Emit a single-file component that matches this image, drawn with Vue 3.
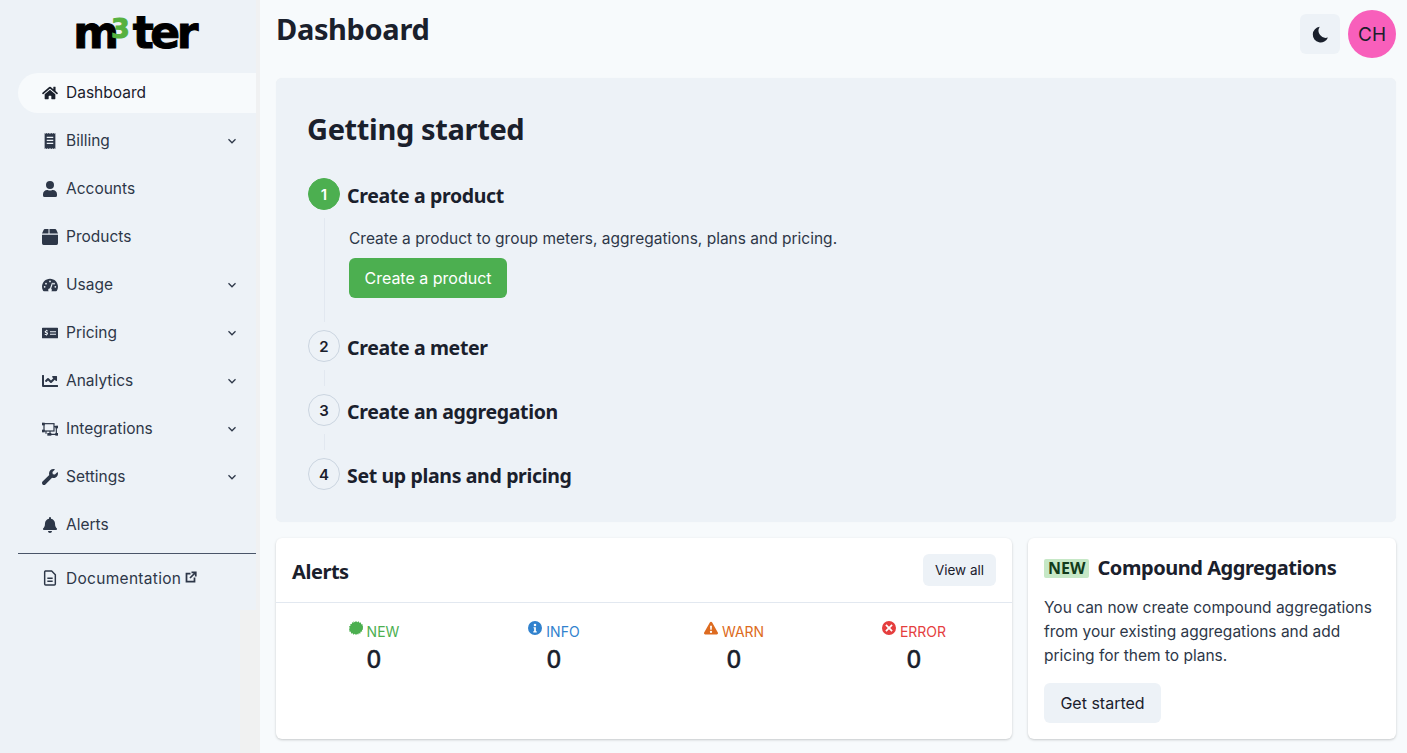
<script setup>
const nav = [
  { label: 'Billing', icon: 'billing', caret: true },
  { label: 'Accounts', icon: 'user' },
  { label: 'Products', icon: 'box' },
  { label: 'Usage', icon: 'gauge', caret: true },
  { label: 'Pricing', icon: 'money', caret: true },
  { label: 'Analytics', icon: 'chart', caret: true },
  { label: 'Integrations', icon: 'proj', caret: true },
  { label: 'Settings', icon: 'wrench', caret: true },
  { label: 'Alerts', icon: 'bell' }
]
const steps = ['Create a meter', 'Create an aggregation', 'Set up plans and pricing']
const alerts = [
  { label: 'NEW', cls: 'new', icon: 'burst' },
  { label: 'INFO', cls: 'info', icon: 'info' },
  { label: 'WARN', cls: 'warn', icon: 'warn' },
  { label: 'ERROR', cls: 'error', icon: 'err' }
]
</script>

<template>
  <div class="app">
    <aside class="side">
      <div class="logo"><span>m</span><span class="three">3</span><span class="ter">ter</span></div>
      <nav class="nav">
        <a class="item active">
          <svg class="ic" viewBox="0 0 576 512"><path fill="currentColor" d="M280.4 148.3 96 300.1V464a16 16 0 0 0 16 16l112-.3a16 16 0 0 0 16-16V368a16 16 0 0 1 16-16h64a16 16 0 0 1 16 16v95.6a16 16 0 0 0 16 16l112 .4a16 16 0 0 0 16-16V300L295.7 148.3a12.2 12.2 0 0 0-15.3 0zM571.6 251.5 488 182.6V44a12 12 0 0 0-12-12h-56a12 12 0 0 0-12 12v72.6L318.5 43a48 48 0 0 0-61 0L4.3 251.5a12 12 0 0 0-1.6 16.9l25.5 31A12 12 0 0 0 45.2 301l235.2-193.7a12.2 12.2 0 0 1 15.3 0L530.9 301a12 12 0 0 0 16.9-1.6l25.5-31a12 12 0 0 0-1.7-16.9z"/></svg>
          <span class="lbl">Dashboard</span>
        </a>
        <a v-for="n in nav" :key="n.label" class="item">
          <svg v-if="n.icon === 'billing'" class="ic" viewBox="0 0 384 512"><path fill="currentColor" d="M20 0 48 24 80 0l32 24 32-24 48 24 48-24 32 24 32-24 32 24 28-24v512l-28-24-32 24-32-24-32 24-48-24-48 24-32-24-32 24-32-24-28 24V0zM88 120v40h208v-40H88zm0 96v40h208v-40H88zm0 96v40h208v-40H88z"/></svg>
          <svg v-else-if="n.icon === 'user'" class="ic" viewBox="0 0 448 512"><path fill="currentColor" d="M224 256a128 128 0 1 0 0-256 128 128 0 0 0 0 256zm89.6 32h-16.7a174 174 0 0 1-145.8 0h-16.7A134.4 134.4 0 0 0 0 422.4V464a48 48 0 0 0 48 48h352a48 48 0 0 0 48-48v-41.6A134.4 134.4 0 0 0 313.6 288z"/></svg>
          <svg v-else-if="n.icon === 'box'" class="ic" viewBox="0 32 512 448" preserveAspectRatio="none"><path fill="currentColor" d="M50.7 58.5 0 160h208V32H93.7a48 48 0 0 0-43 26.5zM240 160h272L461.3 58.5a48 48 0 0 0-43-26.5H240v128zm272 32H0v240a48 48 0 0 0 48 48h416a48 48 0 0 0 48-48V192z"/></svg>
          <svg v-else-if="n.icon === 'gauge'" class="ic" viewBox="0 0 576 512"><path fill="currentColor" fill-rule="evenodd" d="M288 32C129 32 0 161 0 320c0 53 14 102 39 145 6 10 17 15 28 15h442c11 0 22-5 28-15 25-43 39-92 39-145C576 161 447 32 288 32zM288 96a32 32 0 1 1 0 64 32 32 0 0 1 0-64zM96 352a32 32 0 1 1 0-64 32 32 0 0 1 0 64zm48-112a32 32 0 1 1 0-64 32 32 0 0 1 0 64zm247-40-61 185c15 13 24 31 24 55 0 22-8 30-19 40H239c-11-10-15-18-15-40 0-34 29-63 64-64l62-186c4-12 16-18 28-14 12 4 17 12 13 24zm41 40a32 32 0 1 1 0-64 32 32 0 0 1 0 64zm48 112a32 32 0 1 1 0-64 32 32 0 0 1 0 64z"/></svg>
          <svg v-else-if="n.icon === 'money'" class="ic" viewBox="0 0 24 24"><path fill="currentColor" fill-rule="evenodd" d="M1 4h22a1 1 0 0 1 1 1v14a1 1 0 0 1-1 1H1a1 1 0 0 1-1-1V5a1 1 0 0 1 1-1zm5 3v1.200C4.800 8.400 4 9.200 4 10.200c0 2.300 3 1.600 3 2.800 0 .8-2 .8-3 .2v1.400c.6.200 1.300.3 2 .3V16h1v-1.200c1.200-.3 2-1.100 2-2.100 0-2.300-3-1.700-3-2.800 0-.7 1.600-.7 2.600-.2V8.300C8.100 8.100 7.600 8 7 8V7H6zm6 2.500V11h9V9.500h-9zm0 3.500v1.500h9V13h-9z"/></svg>
          <svg v-else-if="n.icon === 'chart'" class="ic" viewBox="0 0 512 512"><path fill="currentColor" d="M496 384H64V80a16 16 0 0 0-16-16H16A16 16 0 0 0 0 80v336a32 32 0 0 0 32 32h464a16 16 0 0 0 16-16v-32a16 16 0 0 0-16-16zM464 96H346a24 24 0 0 0-17 41l32 33-73 73-73-73a32 32 0 0 0-46 0l-69 69a16 16 0 0 0 0 23l23 23a16 16 0 0 0 23 0l46-46 73 73a32 32 0 0 0 46 0l96-96 33 32a24 24 0 0 0 41-17V112a16 16 0 0 0-16-16z"/></svg>
          <svg v-else-if="n.icon === 'proj'" class="ic" viewBox="0 0 24 24"><g fill="none" stroke="currentColor" stroke-width="1.800"><rect x="3" y="4" width="15" height="11"/><path d="M18 8.500H22M21.500 8.500v11M21.500 20H12M12 15v5M6 15v4"/></g><g fill="currentColor"><rect x="0" y="2.500" width="4" height="4"/><rect x="0" y="13" width="4" height="4"/><rect x="20" y="7" width="4" height="4"/><rect x="20" y="18" width="4" height="4"/><rect x="8" y="18" width="6" height="4"/></g></svg>
          <svg v-else-if="n.icon === 'wrench'" class="ic" viewBox="0 0 512 512"><path fill="currentColor" d="M507.700 109.100c-2.200-9-13.500-12.100-20.100-5.500l-74.400 74.400-67.900-11.300-11.300-67.900 74.400-74.400c6.600-6.600 3.400-17.900-5.700-20.200-47.400-11.700-99.600.9-136.600 37.900-39.600 39.600-50.600 97.100-34.100 147.200L18.700 402.800c-25 25-25 65.500 0 90.500 25 25 65.500 25 90.500 0l213.200-213.200c50.100 16.700 107.500 5.700 147.400-34.200 37.100-37.100 49.700-89.300 37.900-136.800z"/></svg>
          <svg v-else-if="n.icon === 'bell'" class="ic" viewBox="0 0 448 512"><path fill="currentColor" d="M224 512c35 0 64-29 64-64H160c0 35 29 64 64 64zm215-150c-19-21-55-52-55-154 0-78-54-140-128-155V32a32 32 0 0 0-64 0v21C118 68 64 130 64 208c0 102-36 133-55 154-6 6-9 14-9 22 0 16 13 32 32 32h384c19 0 32-16 32-32 0-8-3-16-9-22z"/></svg>
          <span class="lbl">{{ n.label }}</span>
          <svg v-if="n.caret" class="caret" viewBox="0 0 24 24"><path fill="none" stroke="currentColor" stroke-width="2.500" d="m5 8.500 7 7 7-7"/></svg>
        </a>
      </nav>
      <div class="rule"></div>
      <a class="item doc">
        <svg class="ic" viewBox="0 0 24 24"><path fill="none" stroke="currentColor" stroke-width="2.200" stroke-linejoin="round" d="M5 1.500h9.500L20 7v14a1.500 1.500 0 0 1-1.500 1.500h-13A1.500 1.500 0 0 1 4 21V3a1.500 1.500 0 0 1 1-1.500zM8 12.500h8M8 17h8"/></svg>
        <span class="doc-text">Documentation</span>
        <svg class="ext" viewBox="0 0 24 24"><path fill="none" stroke="currentColor" stroke-width="3.500" d="M19 13v8H3V5h8M10 14 21 3M13 2.500h8.500V11"/></svg>
      </a>
    </aside>

    <main class="main">
      <header class="top">
        <h1>Dashboard</h1>
        <div class="tools">
          <button class="moon">
            <svg viewBox="0 0 24 24"><path fill="currentColor" d="M21.400 15.700A9 9 0 0 1 11 2.300a9.900 9.900 0 1 0 10.400 13.400z"/></svg>
          </button>
          <div class="avatar">CH</div>
        </div>
      </header>

      <section class="start">
        <h2>Getting started</h2>
        <div class="step">
          <div class="num on">1</div>
          <h3>Create a product</h3>
        </div>
        <div class="body big">
          <p>Create a product to group meters, aggregations, plans and pricing.</p>
          <button class="green">Create a product</button>
        </div>
        <template v-for="(s, i) in steps" :key="s">
          <div class="step">
            <div class="num">{{ i + 2 }}</div>
            <h3>{{ s }}</h3>
          </div>
          <div v-if="i < 2" class="body small"></div>
        </template>
      </section>

      <div class="cards">
        <section class="card alerts">
          <div class="card-head">
            <h4>Alerts</h4>
            <button class="soft small-btn">View all</button>
          </div>
          <div class="stats">
            <div v-for="a in alerts" :key="a.label" class="stat">
              <div class="stat-label" :class="a.cls">
                <svg v-if="a.icon === 'burst'" viewBox="0 0 24 24"><path fill="currentColor" d="m12 0 2 2 2.500-1.500 1.200 2.700 2.800-.6.300 2.900 2.900.3-.6 2.800 2.700 1.200L23.300 12l1.500 2-2.700 1.400.6 2.800-2.900.3-.3 2.900-2.800-.6-1.200 2.700L14 22l-2 2-2-2-2.500 1.500-1.200-2.700-2.800.6-.3-2.900-2.900-.3.600-2.800L-.1 14l1.500-2-1.500-2.500 2.700-1.200-.6-2.800 2.900-.3.300-2.900 2.800.6L7.500.5 10 2z"/></svg>
                <svg v-else-if="a.icon === 'info'" viewBox="0 0 24 24"><path fill="currentColor" fill-rule="evenodd" d="M12 0a12 12 0 1 0 0 24 12 12 0 0 0 0-24zm0 4.500a2.200 2.200 0 1 1 0 4.400 2.200 2.200 0 0 1 0-4.400zM9.500 10.500h4v7h1.500v2.200H9v-2.200h1.500v-5h-1z"/></svg>
                <svg v-else-if="a.icon === 'warn'" viewBox="0 0 24 24"><path fill="currentColor" fill-rule="evenodd" d="M10 2.500a2.300 2.300 0 0 1 4 0l9.700 17a2.300 2.300 0 0 1-2 3.500H2.300a2.300 2.300 0 0 1-2-3.500zM10.400 8l.4 7h2.400l.4-7zM12 16.500a2 2 0 1 0 0 4 2 2 0 0 0 0-4z"/></svg>
                <svg v-else viewBox="0 0 24 24"><path fill="currentColor" fill-rule="evenodd" d="M12 0a12 12 0 1 0 0 24 12 12 0 0 0 0-24zM7.800 5.700 12 9.900l4.200-4.200 2.100 2.100-4.200 4.200 4.200 4.200-2.100 2.100-4.200-4.200-4.200 4.200-2.100-2.100 4.200-4.200-4.200-4.200z"/></svg>
                <span>{{ a.label }}</span>
              </div>
              <div class="stat-val">0</div>
            </div>
          </div>
        </section>

        <section class="card promo">
          <div class="promo-title"><span class="badge">NEW</span><h4>Compound Aggregations</h4></div>
          <p>You can now create compound aggregations from your existing aggregations and add pricing for them to plans.</p>
          <button class="soft">Get started</button>
        </section>
      </div>
    </main>
  </div>
</template>

<style>
html, body { margin: 0; padding: 0; }
</style>

<style scoped>
.app {
  display: flex;
  width: 100%;
  height: 753px;
  overflow: hidden;
  background: #f7fafc;
  color: #2d3748;
  font-family: "Inter", "Noto Sans", sans-serif;
  font-size: 15.5px;
}
.side {
  position: relative;
  width: 260px;
  flex: none;
  box-sizing: border-box;
  padding: 0 4px 0 18px;
  background: #edf2f7;
}
.side::before {
  content: "";
  position: absolute;
  left: 256px;
  top: 0;
  width: 4px;
  height: 610px;
  background: #f0f1f2;
}
.side::after {
  content: "";
  position: absolute;
  left: 240px;
  top: 610px;
  width: 20px;
  bottom: 0;
  background: #f0f1f1;
}
.logo {
  display: flex;
  justify-content: center;
  align-items: baseline;
  height: 73px;
  box-sizing: border-box;
  padding: 11px 6px 0 0;
  font: 700 44px/44px "DejaVu Sans", sans-serif;
  color: #000;
  -webkit-text-stroke: 1px #000;
}
.logo .three {
  position: relative;
  top: -10px;
  margin: 0 3px 0 -8px;
  font-size: 27px;
  color: #56b13f;
  -webkit-text-stroke: 1px #56b13f;
}
.logo .ter { letter-spacing: -3.5px; }
.nav { display: flex; flex-direction: column; gap: 8px; }
.item {
  display: flex;
  align-items: center;
  height: 40px;
  padding: 0 18px 0 24px;
  border-radius: 20px 0 0 20px;
}
.lbl { margin-top: -2px; }
.item.active { background: #f7fafc; color: #1a202c; }
.ic { width: 16px; height: 16px; flex: none; margin-right: 8px; }
.caret { width: 12px; height: 12px; margin-left: auto; }
.rule { height: 1px; background: #4a5568; margin-top: 8px; }
.doc { height: 48px; }
.doc-text { letter-spacing: .3px; }
.ext { width: 12px; height: 12px; margin-left: 4px; margin-top: -3px; }

.main {
  flex: 1;
  min-width: 0;
  padding: 0 11px 0 16px;
  box-sizing: border-box;
}
.top {
  display: flex;
  justify-content: space-between;
  height: 78px;
  box-sizing: border-box;
}
h1 {
  margin: 9px 0 0;
  font: 700 29px/40px "Noto Sans", sans-serif;
  letter-spacing: -.35px;
  color: #1a202c;
}
.tools { display: flex; gap: 8px; padding-top: 10px; align-items: flex-start; }
.moon {
  width: 40px;
  height: 40px;
  margin-top: 4px;
  border: 0;
  border-radius: 6px;
  background: #edf2f7;
  color: #1a202c;
  display: flex;
  align-items: center;
  justify-content: center;
  padding: 0;
}
.moon svg { width: 19px; height: 19px; }
.avatar {
  width: 48px;
  height: 48px;
  border-radius: 50%;
  background: #f85fbb;
  color: #1a202c;
  font-size: 19px;
  display: flex;
  align-items: center;
  justify-content: center;
}
.start {
  background: #edf2f7;
  border-radius: 6px;
  padding: 31px 32px 32px;
  height: 444px;
  box-sizing: border-box;
  box-shadow: 0 0 1px rgba(0,0,0,.06);
}
h2 {
  margin: 0 0 29px -1px;
  font: 700 29px/40px "Noto Sans", sans-serif;
  letter-spacing: -.35px;
  color: #1a202c;
}
.step { display: flex; align-items: center; gap: 7px; height: 32px; }
.num {
  width: 30px;
  height: 30px;
  border: 1px solid #cbd5e0;
  border-radius: 50%;
  display: flex;
  align-items: center;
  justify-content: center;
  font: 600 15px "Inter", sans-serif;
  color: #1a202c;
}
.num.on { background: #4caf50; border-color: #4caf50; color: #fff; }
h3 {
  margin: 4px 0 0;
  font: 700 19.5px/30px "Noto Sans", sans-serif;
  letter-spacing: -.35px;
  color: #1a202c;
}
.body { border-left: 1px solid #e2e8f0; }
.body.big { padding: 9px 0 0 24px; height: 104px; box-sizing: border-box; margin: 8px 0 8px 16px; }
.body.small { height: 16px; margin: 8px 0 8px 16px; }
p { margin: 0; line-height: 24px; }
.green {
  display: block;
  margin-top: 7px;
  height: 40px;
  width: 158px;
  border: 0;
  border-radius: 6px;
  background: #4caf50;
  color: #fff;
  font: inherit;
  font-size: 16px;
  padding: 0;
}
.cards { display: grid; grid-template-columns: 736px 368px; gap: 16px; margin-top: 16px; }
.card {
  background: #fff;
  border-radius: 6px;
  box-shadow: 0 1px 3px rgba(0,0,0,.15), 0 1px 2px rgba(0,0,0,.06);
  height: 201px;
  box-sizing: border-box;
}
.card-head {
  display: flex;
  justify-content: space-between;
  align-items: center;
  height: 64px;
  padding: 0 16px;
  border-bottom: 1px solid #e2e8f0;
}
.card-head h4 { margin-top: 4px; }
h4 {
  margin: 0;
  font: 700 20px/30px "Noto Sans", sans-serif;
  letter-spacing: -.45px;
  color: #1a202c;
}
.soft {
  border: 0;
  border-radius: 6px;
  background: #edf2f7;
  color: #1a202c;
  font: inherit;
  font-size: 16px;
  height: 40px;
  width: 117px;
  padding: 0;
}
.small-btn { width: 73px; height: 32px; font-size: 13.5px; }
.stats { display: grid; grid-template-columns: repeat(4, 180px); padding: 16px 8px 0; }
.stat { text-align: center; }
.stat-label {
  display: flex;
  justify-content: center;
  align-items: center;
  gap: 4px;
  font-size: 14px;
  height: 24px;
}
.stat-label svg { width: 14px; height: 14px; margin-top: -6px; }
.stat-label.new { color: #4caf50; }
.stat-label.info { color: #3182ce; }
.stat-label.warn { color: #dd6b20; }
.stat-label.error { color: #e53e3e; }
.stat-val {
  font-family: "DejaVu Sans", sans-serif;
  font-size: 24px;
  font-weight: 400;
  -webkit-text-stroke: .5px #1a202c;
  line-height: 30px;
  margin-top: 2px;
  color: #1a202c;
}
.promo { padding: 15px 16px 16px; }
.promo-title { display: flex; align-items: center; gap: 8px; }
.badge {
  background: #c6e8c6;
  color: #123b1a;
  font: 700 16px/19px "Noto Sans", sans-serif;
  padding: 0 4px;
  border-radius: 2px;
}
.promo p { margin: 13px 0 15px; }
</style>
